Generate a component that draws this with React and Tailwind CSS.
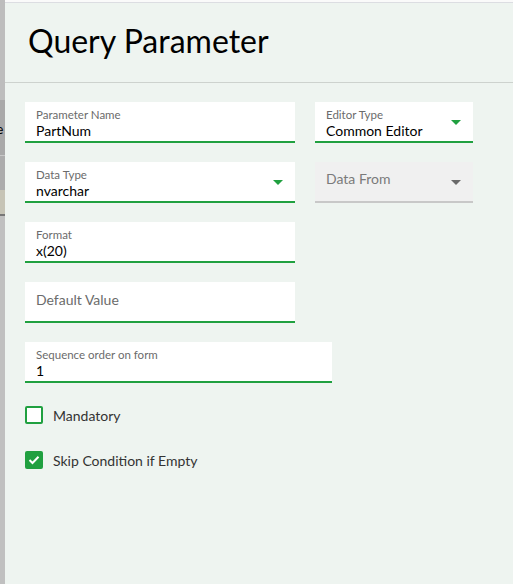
import React from "react";

const font = { fontFamily: '"Lato", "Open Sans", sans-serif' };

function Arrow({ color }) {
  return (
    <svg width="10" height="6" viewBox="0 0 10 6" className="shrink-0">
      <path d="M0 0 L10 0 L5 5 Z" fill={color} />
    </svg>
  );
}

function Field({ label, value, width, select, disabled, placeholder }) {
  if (disabled) {
    return (
      <div className={`${width} h-[41px] bg-[#f0f0f0] border-b-2 border-[#c8c8c8] flex items-center justify-between pl-[11px] pr-[12px]`}>
        <span className="text-[14px] text-[#7a7a7a] -mt-[6px]">{label}</span>
        <span className="mt-[3px]"><Arrow color="#6a6a6a" /></span>
      </div>
    );
  }
  if (placeholder) {
    return (
      <div className={`${width} h-[41px] bg-white border-b-2 border-[#20a040] flex items-start pl-[11px] pt-[7px]`}>
        <span className="text-[14px] text-[#6b6b6b]">{label}</span>
      </div>
    );
  }
  return (
    <div className={`${width} h-[41px] bg-white border-b-2 border-[#20a040] flex items-center justify-between pl-[11px] pr-[12px]`}>
      <div className="flex flex-col leading-none pt-[4px]">
        <span className="text-[11.5px] text-[#6b6b6b] leading-[14px]">{label}</span>
        <span className="text-[14px] text-black leading-[18px]">{value}</span>
      </div>
      {select && <span className="mt-[3px]"><Arrow color="#20a040" /></span>}
    </div>
  );
}

export default function App() {
  return (
    <div className="w-[513px] h-[584px] flex bg-white overflow-hidden" style={font}>
      <div className="w-[5px] flex flex-col shrink-0">
        <div className="h-[100px] bg-[#bdbdbd]" />
        <div className="h-[55px] bg-[#a9a9a9] relative overflow-hidden">
          <span className="absolute left-[-4px] top-[18px] text-[14px] text-black">e</span>
        </div>
        <div className="h-[1px] bg-[#c8c8c8]" />
        <div className="h-[34px] bg-[#acacac]" />
        <div className="h-[24px] bg-[#c6c4b6]" />
        <div className="h-[2px] bg-[#777]" />
        <div className="flex-1 bg-[#c0c0c0]" />
      </div>
      <div className="flex-1 flex flex-col">
        <div className="h-[2px] bg-[#fafafa]" />
        <div className="h-[1px] bg-[#dcdde2]" />
        <div className="flex-1 bg-[#eef4f0] flex flex-col">
          <div className="h-[80px] border-b border-[#cdd2ce] flex items-center pl-[23px] pb-[3px]">
            <h1 className="text-[32px] text-black font-normal">Query Parameter</h1>
          </div>
          <div className="pl-[20px] pt-[19px] flex flex-col gap-[19px]">
            <div className="flex gap-[20px]">
              <Field width="w-[270px]" label="Parameter Name" value="PartNum" />
              <Field width="w-[158px]" label="Editor Type" value="Common Editor" select />
            </div>
            <div className="flex gap-[20px]">
              <Field width="w-[270px]" label="Data Type" value="nvarchar" select />
              <Field width="w-[158px]" label="Data From" disabled />
            </div>
            <Field width="w-[270px]" label="Format" value="x(20)" />
            <Field width="w-[270px]" label="Default Value" placeholder />
            <Field width="w-[307px]" label="Sequence order on form" value="1" />
          </div>
          <div className="pl-[20px] pt-[22px] flex flex-col gap-[25px]">
            <label className="flex items-center gap-[10px] h-[20px]">
              <span className="w-[18px] h-[18px] border-2 border-[#20a040] rounded-[2px] bg-white" />
              <span className="text-[14px] text-[#333]">Mandatory</span>
            </label>
            <label className="flex items-center gap-[10px] h-[20px]">
              <span className="w-[18px] h-[18px] rounded-[2px] bg-[#20a040] flex items-center justify-center">
                <svg width="12" height="10" viewBox="0 0 12 10">
                  <path d="M1.5 5 L4.5 8 L10.5 1.8" stroke="white" strokeWidth="2" fill="none" />
                </svg>
              </span>
              <span className="text-[14px] text-[#333]">Skip Condition if Empty</span>
            </label>
          </div>
        </div>
      </div>
    </div>
  );
}
